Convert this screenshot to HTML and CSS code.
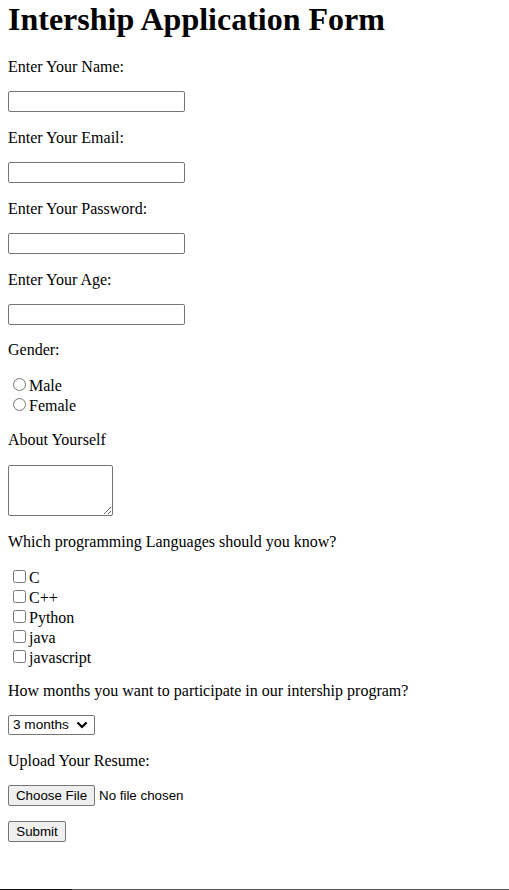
FILE: index.html
```html
<!DOCTYPE html>
<html lang="en">
<head>
<meta charset="utf-8">
<title>Intership Application Form</title>
<link rel="stylesheet" href="styles.css">
</head>
<body>
<h1 class="title">Intership Application Form</h1>
<form class="form">
  <div class="field field--text">
    <label class="label" for="name">Enter Your Name:</label>
    <input class="text" id="name" type="text">
  </div>
  <div class="field field--text">
    <label class="label" for="email">Enter Your Email:</label>
    <input class="text" id="email" type="email">
  </div>
  <div class="field field--text">
    <label class="label" for="pw">Enter Your Password:</label>
    <input class="text" id="pw" type="password">
  </div>
  <div class="field">
    <label class="label" for="age">Enter Your Age:</label>
    <input class="text" id="age" type="text">
  </div>
  <div class="field">
    <span class="label label--wide">Gender:</span>
    <div class="options">
      <div class="opt"><input type="radio" name="g" id="male"><label for="male">Male</label></div>
      <div class="opt"><input type="radio" name="g" id="female"><label for="female">Female</label></div>
    </div>
  </div>
  <div class="field field--text">
    <label class="label label--wide" for="about">About Yourself</label>
    <textarea class="area" id="about"></textarea>
  </div>
  <div class="field field--tight">
    <span class="label label--wide">Which programming Languages should you know?</span>
    <div class="options">
      <div class="opt"><input type="checkbox" id="c1"><label for="c1">C</label></div>
      <div class="opt"><input type="checkbox" id="c2"><label for="c2">C++</label></div>
      <div class="opt"><input type="checkbox" id="c3"><label for="c3">Python</label></div>
      <div class="opt"><input type="checkbox" id="c4"><label for="c4">java</label></div>
      <div class="opt"><input type="checkbox" id="c5"><label for="c5">javascript</label></div>
    </div>
  </div>
  <div class="field field--text">
    <label class="label" for="months">How months you want to participate in our intership program?</label>
    <select class="select" id="months"><option>3 months</option><option>6 months</option></select>
  </div>
  <div class="field field--tight">
    <label class="label" for="resume">Upload Your Resume:</label>
    <input class="file" id="resume" type="file">
  </div>
  <div class="field">
    <button class="btn" type="button">Submit</button>
  </div>
</form>
<div class="scrollbar"><span class="thumb"></span></div>
</body>
</html>
```

FILE: styles.css
```css
html, body {
  background: #fff;
}
body {
  margin: 0;
  padding: 1px 8px 0;
  font-family: "Liberation Serif", "Times New Roman", serif;
  font-size: 16px;
  color: #000;
}
.title {
  margin: 0;
  font-size: 32px;
  font-weight: bold;
  line-height: 37px;
}
.form {
  display: flex;
  flex-direction: column;
  margin-top: 20px;
}
.field {
  display: flex;
  flex-direction: column;
  align-items: flex-start;
  margin-bottom: 16px;
}
.field--text {
  margin-bottom: 17px;
}
.field--tight {
  margin-bottom: 15px;
}
.label {
  display: block;
  line-height: 18px;
  margin-bottom: 15px;
}
.label--wide {
  margin-bottom: 16px;
}
.text {
  box-sizing: border-box;
  width: 177px;
  height: 21px;
  margin: 0;
  padding: 1px 2px;
  border: 1px solid #767676;
  border-radius: 2px;
  font-family: "Liberation Sans", Arial, sans-serif;
  font-size: 13.333px;
  background: #fff;
}
.area {
  box-sizing: border-box;
  width: 105px;
  height: 51px;
  margin: 0;
  padding: 2px;
  border: 1px solid #767676;
  border-radius: 2px;
  font-family: "Liberation Mono", monospace;
  font-size: 13.333px;
}
.options {
  display: flex;
  flex-direction: column;
}
.opt {
  height: 20px;
  line-height: 18px;
  display: flex;
  align-items: flex-end;
}
.opt input {
  width: 13px;
  height: 13px;
  margin: 0 3px 4px 5px;
}
.opt label {
  line-height: 18px;
}
.select {
  appearance: none;
  -webkit-appearance: none;
  box-sizing: border-box;
  width: 87px;
  height: 20px;
  margin: 0;
  padding: 0 0 0 4px;
  font-family: "Liberation Sans", Arial, sans-serif;
  font-size: 13.6px;
  line-height: 18px;
  border: 1px solid #767676;
  border-radius: 2px;
  color: #000;
  background: #fff url("data:image/svg+xml,%3Csvg xmlns='http://www.w3.org/2000/svg' width='12' height='8' viewBox='0 0 12 8'%3E%3Cpath d='M1.5 1.5 L6 6 L10.5 1.5' fill='none' stroke='%23000' stroke-width='2.2'/%3E%3C/svg%3E") no-repeat right 6px center;
}
.file {
  font-family: "Liberation Sans", Arial, sans-serif;
  font-size: 13.333px;
  margin: 0;
  height: 21px;
  color: #000;
}
.file::file-selector-button {
  box-sizing: border-box;
  width: 87px;
  height: 21px;
  margin: 0 4px 0 0;
  padding: 1px 0;
  font-family: "Liberation Sans", Arial, sans-serif;
  font-size: 13.333px;
  color: #000;
  background: #efefef;
  border: 1px solid #767676;
  border-radius: 2px;
}
.btn {
  box-sizing: border-box;
  width: 58px;
  height: 21px;
  margin: 0;
  padding: 1px 0;
  font-family: "Liberation Sans", Arial, sans-serif;
  font-size: 13.333px;
  color: #000;
  background: #efefef;
  border: 1px solid #767676;
  border-radius: 2px;
}
.scrollbar {
  position: fixed;
  left: 0;
  right: 0;
  bottom: 0;
  height: 1px;
  background: #555;
  display: flex;
}
.thumb {
  width: 72px;
  background: #111;
}
```
